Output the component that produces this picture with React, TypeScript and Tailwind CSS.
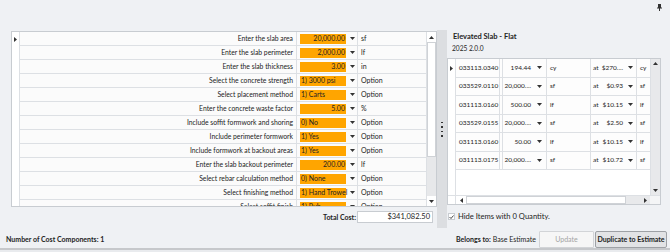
import React from 'react'

interface InputRow { label: string; value: string; unit: string; num?: boolean }
interface ItemRow { code: string; qty: string; unit: string; price: string }

const inputs: InputRow[] = [
  { label: 'Enter the slab area', value: '20,000.00', unit: 'sf', num: true },
  { label: 'Enter the slab perimeter', value: '2,000.00', unit: 'lf', num: true },
  { label: 'Enter the slab thickness', value: '3.00', unit: 'in', num: true },
  { label: 'Select the concrete strength', value: '1) 3000 psi', unit: 'Option' },
  { label: 'Select placement method', value: '1) Carts', unit: 'Option' },
  { label: 'Enter the concrete waste factor', value: '5.00', unit: '%', num: true },
  { label: 'Include soffit formwork and shoring', value: '0) No', unit: 'Option' },
  { label: 'Include perimeter formwork', value: '1) Yes', unit: 'Option' },
  { label: 'Include formwork at backout areas', value: '1) Yes', unit: 'Option' },
  { label: 'Enter the slab backout perimeter', value: '200.00', unit: 'lf', num: true },
  { label: 'Select rebar calculation method', value: '0) None', unit: 'Option' },
  { label: 'Select finishing method', value: '1) Hand Trowel', unit: 'Option' },
  { label: 'Select soffit finish', value: '1) Rub', unit: 'Option' },
]

const items: ItemRow[] = [
  { code: '033113.0340', qty: '194.44', unit: 'cy', price: '$270....' },
  { code: '033529.0110', qty: '20,000....', unit: 'sf', price: '$0.93' },
  { code: '031113.0160', qty: '500.00', unit: 'lf', price: '$10.15' },
  { code: '033529.0155', qty: '20,000....', unit: 'sf', price: '$2.50' },
  { code: '031113.0160', qty: '50.00', unit: 'lf', price: '$10.15' },
  { code: '031113.0175', qty: '20,000....', unit: 'sf', price: '$10.72' },
]

const Caret = ({ className = '' }: { className?: string }) => (
  <svg width="5" height="3" viewBox="0 0 5 3" className={`shrink-0 ${className}`}><path d="M0 0h5L2.5 3z" fill="#333" /></svg>
)
const Up = () => <svg width="5" height="3" viewBox="0 0 5 3"><path d="M0 3h5L2.5 0z" fill="#333" /></svg>
const Right = () => <svg width="3" height="5" viewBox="0 0 3 5"><path d="M0 0v5L3 2.5z" fill="#333" /></svg>
const Left = () => <svg width="3" height="5" viewBox="0 0 3 5"><path d="M3 0v5L0 2.5z" fill="#333" /></svg>

function InputLine({ r }: { r: InputRow }) {
  return (
    <div className="flex h-[14px] shrink-0 border-b border-[#dde0e4] bg-[#fbfbfb]">
      <div className="w-[277px] border-r border-[#dde0e4] flex items-center justify-end pr-[3px] whitespace-nowrap text-[6.8px]">{r.label}</div>
      <div className="w-[61px] border-r border-[#dde0e4] flex items-center">
        <div className={`ml-[3px] w-[46px] h-[10px] bg-[#ffa500] flex items-center px-[1px] whitespace-nowrap ${r.num ? 'justify-end' : ''}`}>{r.value}</div>
        <Caret className="ml-[4px]" />
      </div>
      <div className="flex-1 flex items-center pl-[3px]">{r.unit}</div>
    </div>
  )
}

function ItemLine({ r }: { r: ItemRow }) {
  const cell = 'border-r border-[#dde0e4] flex items-center whitespace-nowrap'
  return (
    <div className="flex h-[18.5px] shrink-0 border-b border-[#dde0e4] bg-[#fdfdfd]">
      <div className={`w-[44px] pl-[3px] ${cell}`}>{r.code}</div>
      <div className={`w-[3px] ${cell}`} />
      <div className={`w-[44px] justify-end pr-[4px] ${cell}`}>{r.qty}<Caret className="ml-[6px]" /></div>
      <div className={`w-[44px] pl-[3px] ${cell}`}>{r.unit}</div>
      <div className={`w-[46px] pl-[2px] pr-[3px] ${cell}`}>
        <span>at</span>
        <span className="flex-1 text-right">{r.price}</span>
        <Caret className="ml-[5px]" />
      </div>
      <div className="flex-1 flex items-center pl-[3px]">{r.unit}</div>
    </div>
  )
}

export default function App() {
  return (
    <div className="w-[670px] h-[252px] bg-[#eff1f4] flex flex-col overflow-hidden font-[Lato,sans-serif] text-[7px] text-[#232323]">
      <div className="flex h-[228px] shrink-0">
        {/* left: inputs */}
        <div className="w-[437px] shrink-0 pl-[11px] pt-[31px] flex flex-col">
          <div className="w-[426px] h-[176px] border border-[#c8ccd1] flex bg-white">
            <div className="w-[8px] border-r border-[#dde0e4] bg-white flex justify-center pt-[5px]"><Right /></div>
            <div className="flex-1 flex flex-col overflow-hidden">
              {inputs.map((r, i) => <InputLine key={i} r={r} />)}
            </div>
            <div className="w-[10px] border-l border-[#dde0e4] flex flex-col bg-[#e7e8ea]">
              <div className="h-[10px] bg-white flex items-center justify-center"><Up /></div>
              <div className="h-[115px] bg-white border border-[#cfd2d6]" />
              <div className="flex-1" />
              <div className="h-[10px] bg-white flex items-center justify-center"><Caret /></div>
            </div>
          </div>
          <div className="w-[422px] mt-[4px] h-[12px] flex items-center justify-end">
            <span className="font-bold mr-[1px]">Total Cost:</span>
            <div className="w-[76px] h-[12px] bg-white border border-[#c8ccd1] flex items-center justify-end pr-[2px] text-[7.5px]">$341,082.50</div>
          </div>
        </div>

        {/* splitter */}
        <div className="w-[10px] shrink-0 mt-[30px] h-[198px] bg-[#dcdee1] flex flex-col items-center justify-center gap-[3px]">
          {[0, 1, 2, 3].map(i => <div key={i} className="w-[1.5px] h-[1.5px] bg-[#333]" />)}
        </div>

        {/* right: items */}
        <div className="flex-1 flex flex-col">
          <div className="flex justify-end pr-[8px] pt-[4px] h-[11px]">
            <svg width="5" height="7" viewBox="0 0 5 7"><path d="M1 0h3v4H1z" fill="#333" /><path d="M0 4h5M2.5 4v3" stroke="#333" strokeWidth="1" /></svg>
          </div>
          <div className="mt-[21px] pl-[6px] h-[10px] leading-[10px] font-bold text-[7.5px]">Elevated Slab - Flat</div>
          <div className="mt-[1px] pl-[5px] h-[10px] leading-[10px] text-[6.6px]">2025 2.0.0</div>
          <div className="mt-[5px] w-[214px] h-[147px] border border-[#c8ccd1] flex flex-col bg-white text-[6.5px]">
            <div className="flex-1 flex min-h-0">
              <div className="w-[8px] border-r border-[#dde0e4] flex justify-center pt-[7px]"><Right /></div>
              <div className="flex-1 flex flex-col overflow-hidden">
                {items.map((r, i) => <ItemLine key={i} r={r} />)}
              </div>
              <div className="w-[10px] border-l border-[#dde0e4] bg-[#e8e9eb] flex flex-col justify-between">
                <div className="h-[9px] flex items-center justify-center"><Up /></div>
                <div className="h-[9px] flex items-center justify-center"><Caret /></div>
              </div>
            </div>
            <div className="h-[9px] border-t border-[#dde0e4] flex">
              <div className="w-[8px] border-r border-[#dde0e4]" />
              <div className="w-[10px] flex items-center justify-center"><Left /></div>
              <div className="w-[160px] bg-white border border-[#cfd2d6]" />
              <div className="flex-1 bg-[#e8e9eb] flex items-center justify-end pr-[3px]"><Right /></div>
              <div className="w-[10px] bg-[#f4f5f6]" />
            </div>
          </div>
          <div className="mt-[7px] pl-[1px] h-[9px] flex items-center text-[7.6px]">
            <div className="w-[7px] h-[7px] border border-[#c8ccd1] bg-white flex items-center justify-center">
              <svg width="5" height="4" viewBox="0 0 5 4"><path d="M0.5 2l1.5 1.5L4.5 0.5" fill="none" stroke="#333" strokeWidth="0.9" /></svg>
            </div>
            <span className="ml-[3px]">Hide Items with 0 Quantity.</span>
          </div>
        </div>
      </div>

      {/* status bar */}
      <div className="h-[20px] shrink-0 pt-[3px] pl-[6px] pr-[3px] flex items-center">
        <span className="font-bold">Number of Cost Components: 1</span>
        <div className="flex-1" />
        <span className="font-bold">Belongs to:</span>
        <span className="ml-[2px]">Base Estimate</span>
        <button className="ml-[3px] w-[55px] h-[17px] bg-[#f6f6f6] border border-[#d2d4d7] text-[#a3a3a3] rounded-[1px]">Update</button>
        <button className="ml-[1px] w-[72px] h-[17px] bg-[#e2e3e5] border border-[#9ea1a5] font-bold rounded-[2px]">Duplicate to Estimate</button>
      </div>
      <div className="h-[2px] shrink-0 bg-[#c6c8cb]" />
      <div className="flex-1 bg-[#e9ebee]" />
    </div>
  )
}
